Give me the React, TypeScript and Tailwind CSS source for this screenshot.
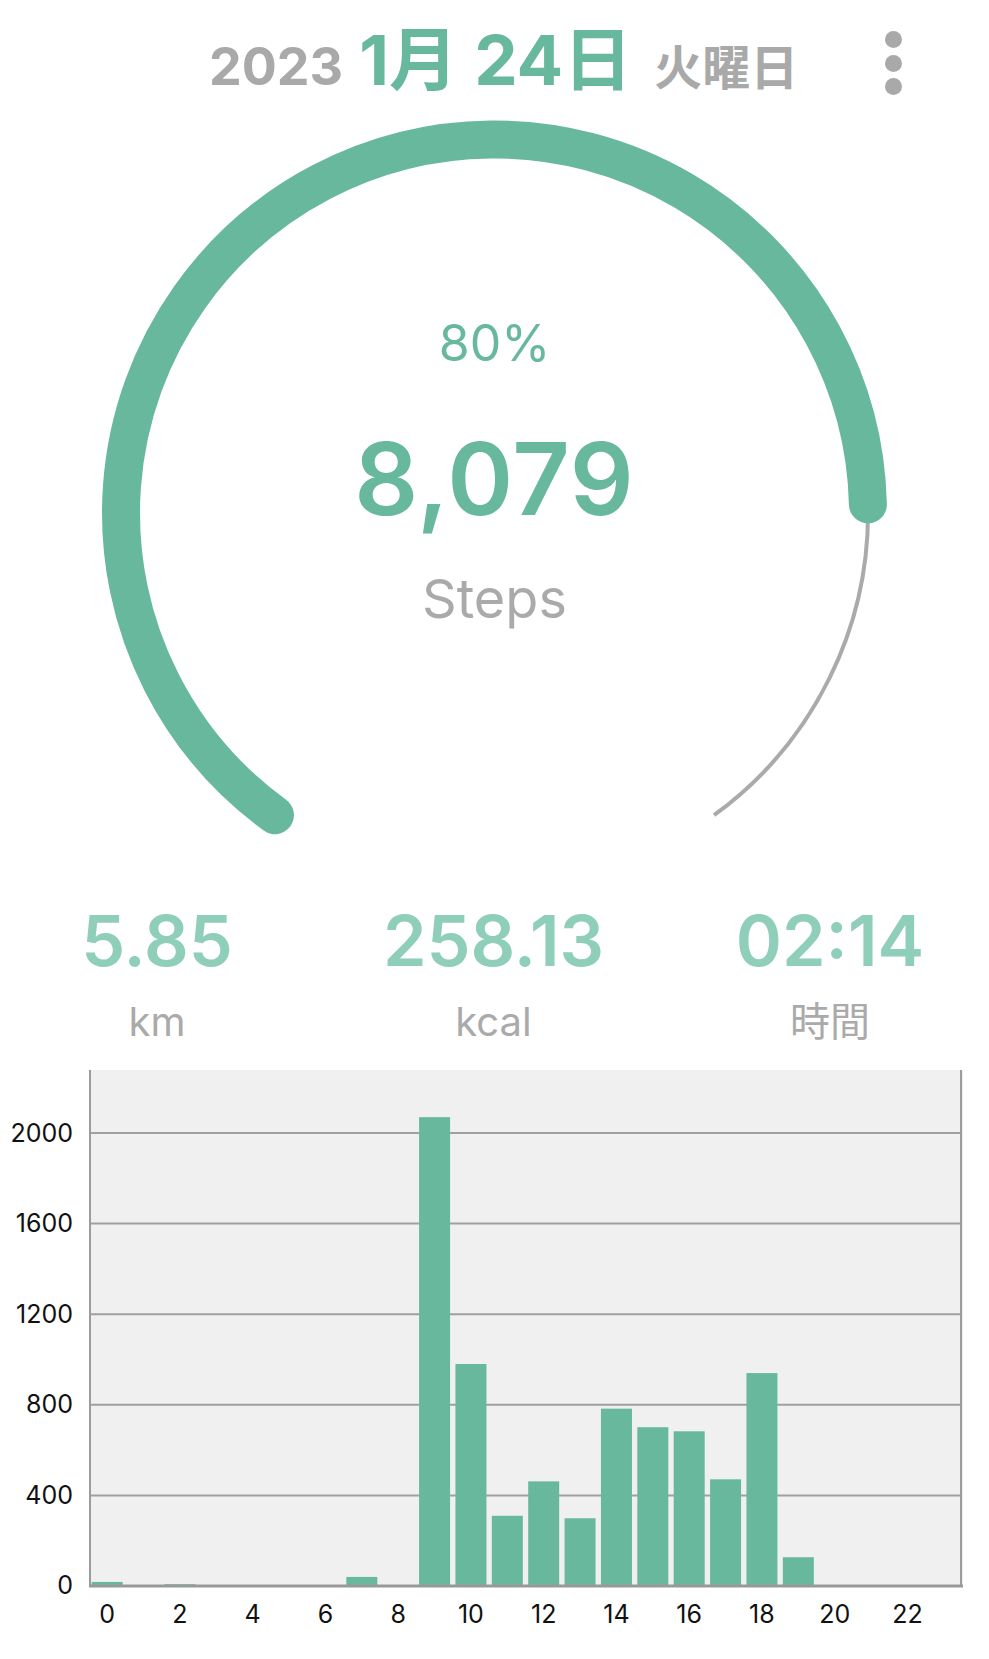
import React from "react";

const hourly = [18, 0, 8, 0, 0, 0, 0, 40, 0, 2070, 980, 310, 462, 299, 783, 701, 683, 471, 940, 127, 0, 0, 0, 0];

// gauge geometry (angles clockwise from 12 o'clock)
const CX = 494.5;
const CY = 393;
const R = 373.5;
const START = 216;
const SWEEP = 288;
const progress = 8079 / 10000;

function polar(deg: number) {
  const a = (deg * Math.PI) / 180;
  return { x: CX + R * Math.sin(a), y: CY - R * Math.cos(a) };
}

function arc(from: number, to: number) {
  const p1 = polar(from);
  const p2 = polar(to);
  const large = to - from > 180 ? 1 : 0;
  return `M ${p1.x} ${p1.y} A ${R} ${R} 0 ${large} 1 ${p2.x} ${p2.y}`;
}

function Gauge() {
  const end = START + SWEEP * progress;
  return (
    <div className="grid h-[740px]">
      <svg className="col-start-1 row-start-1" width={989} height={740} viewBox="0 0 989 740">
        <path d={arc(end, START + SWEEP)} fill="none" stroke="#aaaaaa" strokeWidth={4} />
        <path d={arc(START, end)} fill="none" stroke="#68b89e" strokeWidth={38} strokeLinecap="round" />
      </svg>
      <div className="col-start-1 row-start-1 flex flex-col items-center pt-[198px]">
        <p className="text-[50px] leading-none text-[#68b89e]">80%</p>
        <p className="mt-[61px] text-[100px] font-semibold leading-none tracking-[1px] text-[#68b89e]">8,079</p>
        <p className="mt-[43px] text-[54px] leading-none text-[#aaaaaa]">Steps</p>
      </div>
    </div>
  );
}

function Stat({ value, label }: { value: string; label: string }) {
  return (
    <div className="flex w-[220px] flex-col items-center">
      <p className="text-[70px] font-semibold leading-none text-[#8fceb9]">{value}</p>
      <p className="mt-[26px] text-[40px] leading-none text-[#aaaaaa]">{label}</p>
    </div>
  );
}

const PX = 36.375;
const PH = 516;
const unit = 90.6 / 400;

function Chart() {
  const y = (v: number) => PH - v * unit;
  return (
    <div className="mt-[28px]">
      <div className="flex">
        <div className="flex w-[89px] flex-col items-end gap-[65.6px] pr-[16px] pt-[50.5px] text-[25px] leading-[25px] text-[#111]">
          {["2000", "1600", "1200", "800", "400", "0"].map((t) => (
            <span key={t}>{t}</span>
          ))}
        </div>
        <svg width={874} height={518} viewBox="0 0 874 518">
          <rect x={0} y={0} width={874} height={516} fill="#f0f0f0" />
          {[400, 800, 1200, 1600, 2000].map((v) => (
            <line key={v} x1={0} x2={873} y1={y(v)} y2={y(v)} stroke="#a0a0a0" strokeWidth={2} />
          ))}
          {hourly.map((v, i) =>
            v > 0 ? (
              <rect key={i} x={i * PX + 2.7} y={y(v)} width={31} height={PH - y(v)} fill="#68b89e" />
            ) : null
          )}
          <line x1={1} x2={1} y1={0} y2={516} stroke="#9c9c9c" strokeWidth={2} />
          <line x1={872} x2={872} y1={0} y2={516} stroke="#9c9c9c" strokeWidth={2} />
          <line x1={0} x2={874} y1={516} y2={516} stroke="#999999" strokeWidth={3} />
        </svg>
      </div>
      <div className="mt-[4px] flex pl-[89px] text-[25px] leading-none text-[#111]">
        {[0, 2, 4, 6, 8, 10, 12, 14, 16, 18, 20, 22].map((h) => (
          <div key={h} className="w-[72.75px]">
            <span className="block w-[36.375px] text-center">{h}</span>
          </div>
        ))}
      </div>
    </div>
  );
}

export default function App() {
  return (
    <div className="h-[1659px] w-[989px] overflow-hidden bg-white font-['Inter','Noto_Sans_CJK_JP',sans-serif]">
      <div className="flex h-[120px] items-start pl-[209px] pr-[87px]">
        <div className="flex items-baseline pt-[26px]">
          <span className="text-[52px] font-bold leading-none text-[#a9a9a9]">2023</span>
          <span className="ml-[16px] text-[69px] font-bold leading-none text-[#68b89e]">1月 24日</span>
          <span className="ml-[22px] text-[48px] font-semibold leading-none text-[#a9a9a9]">火曜日</span>
        </div>
        <div className="ml-auto flex flex-col gap-[6.5px] pt-[31px]">
          <span className="block h-[17px] w-[17px] rounded-full bg-[#a9a9a9]" />
          <span className="block h-[17px] w-[17px] rounded-full bg-[#a9a9a9]" />
          <span className="block h-[17px] w-[17px] rounded-full bg-[#a9a9a9]" />
        </div>
      </div>

      <Gauge />

      <div className="flex justify-between pl-[47px] pr-[49px] pt-[46px]">
        <Stat value="5.85" label="km" />
        <Stat value="258.13" label="kcal" />
        <Stat value="02:14" label="時間" />
      </div>

      <Chart />

      <div className="mt-[36px] flex gap-[6px] pl-[159px]">
        <div className="h-[80px] w-[158px] rounded-[10px] border border-[#d6d6d6] bg-[#f1f1f1]" />
        <div className="h-[80px] w-[160px] rounded-[10px] border border-[#d6d6d6] bg-[#f1f1f1]" />
        <div className="h-[80px] w-[160px] rounded-[10px] border border-[#d6d6d6] bg-[#f1f1f1]" />
        <div className="flex h-[80px] w-[159px] overflow-hidden rounded-[10px] border border-[#d6d6d6] bg-[#f1f1f1]">
          <div className="h-full w-[48px] bg-[#5e5138]" />
        </div>
        <div className="h-[80px] w-[156px] rounded-[10px] border border-[#d6d6d6] bg-[#f1f1f1]" />
      </div>
    </div>
  );
}
